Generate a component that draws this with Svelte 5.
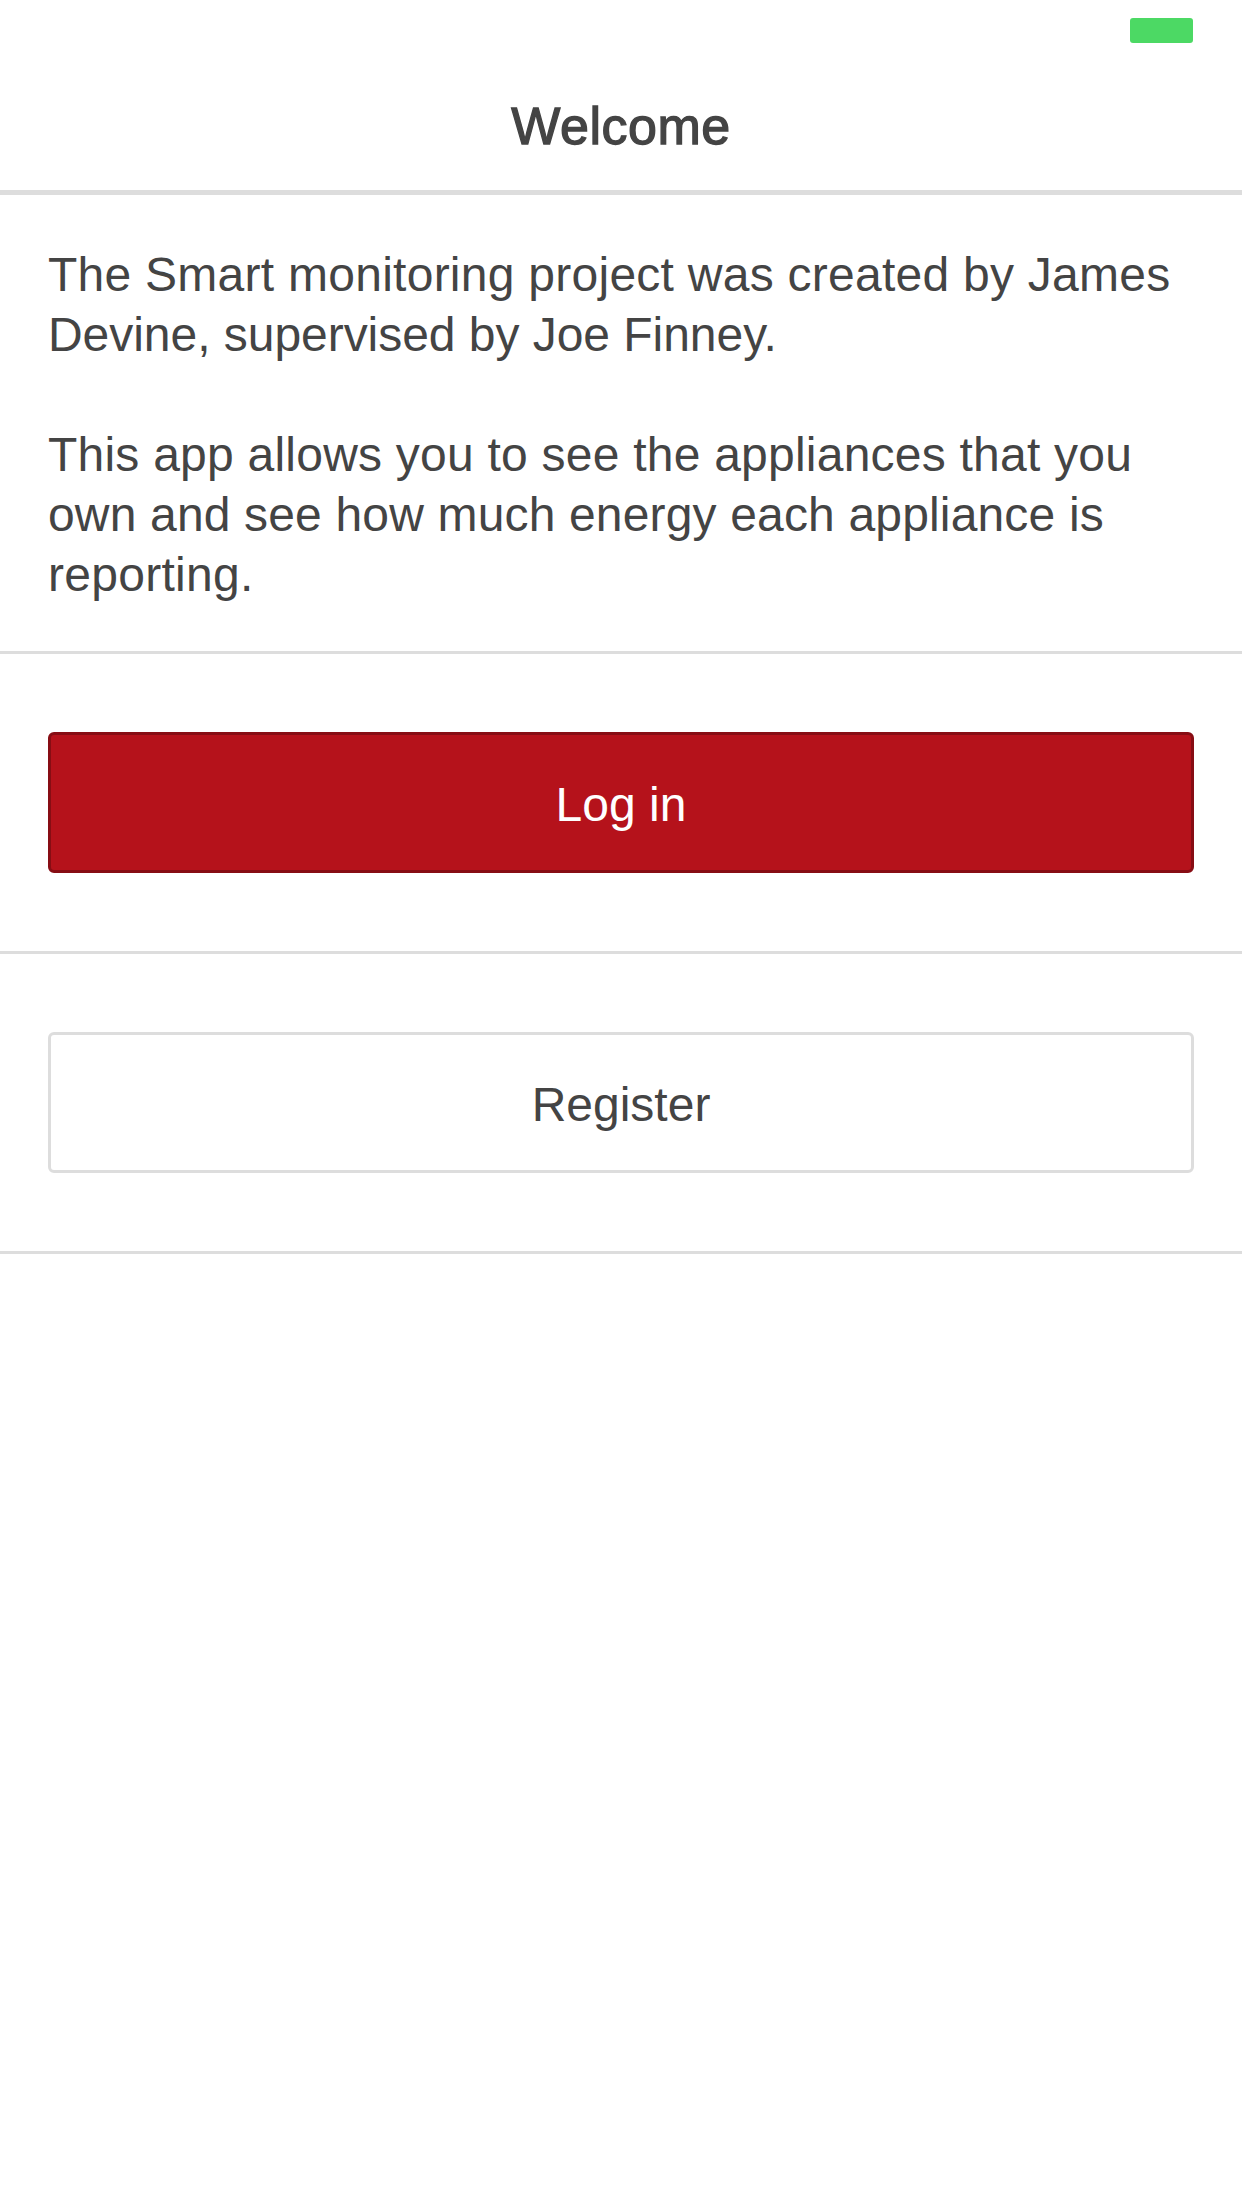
<script>
  const about = [
    [
      { text: 'The Smart monitoring project was created by James', tracking: 0.26 },
      { text: 'Devine, supervised by Joe Finney.', tracking: -0.04 }
    ],
    [
      { text: 'This app allows you to see the appliances that you', tracking: 0.23 },
      { text: 'own and see how much energy each appliance is', tracking: 0.16 },
      { text: 'reporting.', tracking: 0.28 }
    ]
  ];
</script>

<div class="screen">
  <div class="status"><span class="battery"></span></div>
  <header><h1>Welcome</h1></header>
  <section class="about">
    {#each about as lines}
      <p>{#each lines as line}<span style:letter-spacing="{line.tracking}px">{line.text}</span>{/each}</p>
    {/each}
  </section>
  <section class="action"><button class="primary">Log in</button></section>
  <section class="action"><button>Register</button></section>
</div>

<style>
  :global(body) { background: #fff; }
  .screen { box-sizing: border-box; height: 2208px; background: #fff; color: #444; font-family: "Liberation Sans", Arial, sans-serif; font-size: 48px; line-height: 60px; }
  .status { box-sizing: border-box; height: 60px; padding: 18px 49px 0; display: flex; justify-content: flex-end; }
  .battery { width: 63px; height: 25px; border-radius: 3px; background: #4cd964; }
  header { box-sizing: border-box; height: 135px; padding-top: 2px; border-bottom: 5px solid #ddd; display: flex; align-items: center; justify-content: center; }
  h1 { margin: 0; font-size: 52px; font-weight: 400; letter-spacing: 0.5px; -webkit-text-stroke: 1.3px #444; }
  .about { box-sizing: border-box; height: 459px; padding: 50px 48px 0; border-bottom: 3px solid #ddd; }
  p { margin: 0 0 60px; }
  p span { display: block; white-space: nowrap; }
  .action { box-sizing: border-box; height: 300px; padding: 78px 48px; border-bottom: 3px solid #ddd; }
  button { display: block; box-sizing: border-box; width: 100%; height: 141px; margin: 0; padding: 4px 0 0; border: 3px solid #ddd; border-radius: 6px; background: #fff; color: #444; font: inherit; }
  .primary { background: #b5121b; border-color: #870d14; color: #fff; }
</style>
